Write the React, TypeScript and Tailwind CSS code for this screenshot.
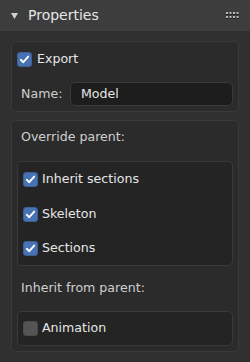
import React from "react";

const font = { fontFamily: '"DejaVu Sans", "Liberation Sans", sans-serif' };

function Check({ checked }: { checked: boolean }) {
  if (!checked) {
    return <div className="w-[15px] h-[15px] rounded-[3px] bg-[#545454] border border-[#4a4a4a] shrink-0" />;
  }
  return (
    <div className="w-[15px] h-[15px] rounded-[3px] bg-[#4772b3] border border-[#3d5f94] shrink-0 flex items-center justify-center">
      <svg width="11" height="11" viewBox="0 0 11 11">
        <path d="M1.8 5.8 L4.3 8.2 L9.2 2.6" fill="none" stroke="#ffffff" strokeWidth="1.9" strokeLinecap="round" strokeLinejoin="round" />
      </svg>
    </div>
  );
}

function Row({ checked, label }: { checked: boolean; label: string }) {
  return (
    <div className="h-[35px] flex items-center gap-[4px] pl-[5px]">
      <Check checked={checked} />
      <span className="text-[12.6px] text-[#e6e6e6]">{label}</span>
    </div>
  );
}

export default function App() {
  return (
    <div className="w-[250px] h-[362px] bg-[#303030] flex flex-col overflow-hidden" style={font}>
      <div className="h-[31px] bg-[#3d3d3d] flex items-center pl-[11px] pr-[10px]">
        <svg width="7" height="6" viewBox="0 0 7 6" className="mr-[10px]">
          <path d="M0 0 L7 0 L3.5 6 Z" fill="#d0d0d0" />
        </svg>
        <span className="text-[14px] text-[#e6e6e6] flex-1">Properties</span>
        <svg width="14" height="8" viewBox="0 0 14 8">
          {[0, 1, 2, 3].map((c) =>
            [0, 1].map((r) => (
              <g key={`${c}-${r}`}>
                <rect x={c * 3.5} y={r * 4 + 1} width="2" height="2" fill="#1a1a1a" />
                <rect x={c * 3.5} y={r * 4} width="2" height="2" fill="#b8b8b8" />
              </g>
            ))
          )}
        </svg>
      </div>

      <div className="flex flex-col px-[11px] pt-[10px]">
        <div className="rounded-[5px] bg-[#2b2b2b] border border-[#3a3a3a] flex flex-col">
          <div className="h-[35px] flex items-center gap-[5px] pl-[5px]">
            <Check checked />
            <span className="text-[12.6px] text-[#e6e6e6]">Export</span>
          </div>
          <div className="h-[34px] flex items-center pl-[9px] pr-[5px]">
            <span className="text-[12.6px] text-[#cfcfcf] w-[49px]">Name:</span>
            <div className="flex-1 h-[24px] rounded-[5px] bg-[#1d1d1d] border border-[#3a3a3a] flex items-center pl-[10px]">
              <span className="text-[12.6px] text-[#e6e6e6]">Model</span>
            </div>
          </div>
        </div>

        <div className="mt-[8px] rounded-[5px] bg-[#2b2b2b] border border-[#3a3a3a] flex flex-col px-[5px]">
          <div className="h-[32px] flex items-center pl-[4px]">
            <span className="text-[12.6px] text-[#cfcfcf]">Override parent:</span>
          </div>
          <div className="mt-[8px] rounded-[5px] bg-[#242424] border border-[#3a3a3a] flex flex-col">
            <Row checked label="Inherit sections" />
            <Row checked label="Skeleton" />
            <div className="h-[33px] flex items-center gap-[4px] pl-[5px]">
              <Check checked />
              <span className="text-[12.6px] text-[#e6e6e6]">Sections</span>
            </div>
          </div>
          <div className="mt-[6px] h-[32px] flex items-center pl-[4px]">
            <span className="text-[12.6px] text-[#cfcfcf]">Inherit from parent:</span>
          </div>
          <div className="mt-[7px] mb-[5px] rounded-[5px] bg-[#242424] border border-[#3a3a3a] flex flex-col">
            <div className="h-[33px] flex items-center gap-[4px] pl-[5px]">
              <Check checked={false} />
              <span className="text-[12.6px] text-[#e6e6e6]">Animation</span>
            </div>
          </div>
        </div>
      </div>
    </div>
  );
}
